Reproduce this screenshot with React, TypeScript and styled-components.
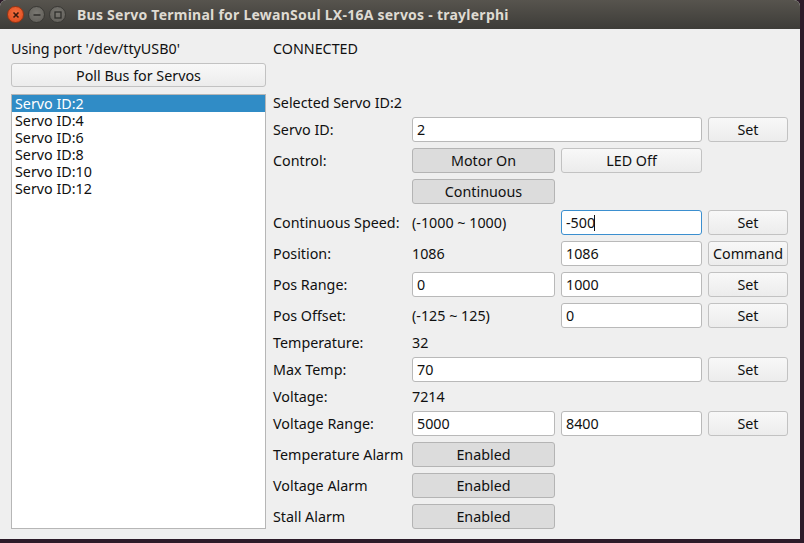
import React from "react";
import styled, { createGlobalStyle } from "styled-components";

const GlobalStyle = createGlobalStyle`
  html, body {
    margin: 0;
    padding: 0;
    background: #2c1b29;
    overflow: hidden;
  }
  * {
    box-sizing: border-box;
  }
`;

const Desktop = styled.div`
  width: 804px;
  height: 543px;
  background: #2c1b29;
  font-family: "Noto Sans", "DejaVu Sans", sans-serif;
  font-size: 14.3px;
  color: #101010;
`;

const Window = styled.div`
  width: 800px;
  height: 539px;
  display: flex;
  flex-direction: column;
  background: #efefef;
  border-radius: 6px 6px 0 0;
  overflow: hidden;
`;

const TitleBar = styled.div`
  height: 29px;
  flex: none;
  display: flex;
  align-items: center;
  padding-left: 7px;
  background: linear-gradient(#57544e, #3d3c38);
`;

const WinButtons = styled.div`
  display: flex;
  gap: 4px;
  margin-right: 11px;
`;

const WinButton = styled.div<{ $close?: boolean }>`
  width: 17px;
  height: 17px;
  border-radius: 50%;
  display: flex;
  align-items: center;
  justify-content: center;
  background: ${(p) =>
    p.$close
      ? "radial-gradient(circle at 50% 40%, #f46f3f, #dc481b)"
      : "radial-gradient(circle at 50% 40%, #7a7872, #5d5b56)"};
  border: 1px solid ${(p) => (p.$close ? "#9c3512" : "#3a3935")};
`;

const Title = styled.div`
  color: #dfdbd2;
  font-weight: 700;
  font-size: 14px;
  letter-spacing: 0.25px;
`;

const Body = styled.div`
  flex: 1;
  display: grid;
  grid-template-columns: 255px 1fr;
  column-gap: 7px;
  padding: 11px 12px 10px 11px;
  min-height: 0;
`;

const LeftPane = styled.div`
  display: flex;
  flex-direction: column;
  min-height: 0;
`;

const Text = styled.div`
  height: 17px;
  line-height: 17px;
  white-space: nowrap;
`;

const PushButton = styled.button<{ $checked?: boolean }>`
  height: 25px;
  padding: 0 4px;
  border-radius: 3px;
  font-family: inherit;
  font-size: 14.3px;
  color: #101010;
  border: 1px solid ${(p) => (p.$checked ? "#b4b4b4" : "#c2c2c2")};
  background: ${(p) =>
    p.$checked ? "#dcdcdc" : "linear-gradient(#f8f8f8, #ececec)"};
  white-space: nowrap;
`;

const PollButton = styled(PushButton)`
  margin-top: 6px;
  height: 24px;
`;

const ServoList = styled.div`
  margin-top: 7px;
  flex: 1;
  background: #fff;
  border: 1px solid #b6b6b6;
`;

const ListItem = styled.div<{ $selected?: boolean }>`
  height: 17px;
  line-height: 17px;
  padding-left: 3px;
  overflow: hidden;
  color: ${(p) => (p.$selected ? "#fff" : "#101010")};
  background: ${(p) => (p.$selected ? "#308cc6" : "transparent")};
`;

const RightPane = styled.div`
  display: flex;
  flex-direction: column;
`;

const Status = styled(Text)`
  margin-bottom: 37px;
`;

const Form = styled.div`
  display: grid;
  grid-template-columns: 133px 143px 141px 80px;
  column-gap: 6px;
  row-gap: 6px;
  margin-top: 6px;
  align-items: center;
`;

const Label = styled(Text)<{ $span?: number }>`
  grid-column: span ${(p) => p.$span ?? 1};
`;

const Field = styled.input<{ $span?: number; $focus?: boolean }>`
  grid-column: span ${(p) => p.$span ?? 1};
  height: 25px;
  width: 100%;
  padding: 0 4px;
  font-family: inherit;
  font-size: 14.3px;
  color: #101010;
  background: #fff;
  border-radius: 3px;
  border: 1px solid ${(p) => (p.$focus ? "#3b8fcf" : "#b9b9b9")};
  outline: none;
`;

const Cursor = styled.span`
  position: absolute;
  top: 5px;
  width: 1px;
  height: 16px;
  background: #101010;
`;

const FieldWrap = styled.div`
  position: relative;
  display: flex;
`;

const Gap = styled.div<{ $span?: number }>`
  grid-column: span ${(p) => p.$span ?? 1};
`;

const Wide = styled(PushButton)`
  width: 100%;
`;

const App: React.FC = () => {
  const servos = [2, 4, 6, 8, 10, 12];
  return (
    <>
      <GlobalStyle />
      <Desktop>
        <Window>
          <TitleBar>
            <WinButtons>
              <WinButton $close>
                <svg width="8" height="8" viewBox="0 0 8 8">
                  <path d="M1.5 1.5 L6.5 6.5 M6.5 1.5 L1.5 6.5" stroke="#3a1a0e" strokeWidth="1.6" />
                </svg>
              </WinButton>
              <WinButton>
                <svg width="8" height="8" viewBox="0 0 8 8">
                  <path d="M0.5 4 H7.5" stroke="#2f2e2b" strokeWidth="1.6" />
                </svg>
              </WinButton>
              <WinButton>
                <svg width="8" height="8" viewBox="0 0 8 8">
                  <rect x="1" y="1" width="6" height="6" fill="none" stroke="#2f2e2b" strokeWidth="1.3" />
                </svg>
              </WinButton>
            </WinButtons>
            <Title>Bus Servo Terminal for LewanSoul LX-16A servos - traylerphi</Title>
          </TitleBar>
          <Body>
            <LeftPane>
              <Text>Using port '/dev/ttyUSB0'</Text>
              <PollButton>Poll Bus for Servos</PollButton>
              <ServoList>
                {servos.map((id, i) => (
                  <ListItem key={id} $selected={i === 0}>
                    Servo ID:{id}
                  </ListItem>
                ))}
              </ServoList>
            </LeftPane>
            <RightPane>
              <Status>CONNECTED</Status>
              <Text>Selected Servo ID:2</Text>
              <Form>
                <Label>Servo ID:</Label>
                <Field $span={2} defaultValue="2" />
                <Wide>Set</Wide>

                <Label>Control:</Label>
                <Wide $checked>Motor On</Wide>
                <Wide>LED Off</Wide>
                <Gap />

                <Gap />
                <Wide $checked>Continuous</Wide>
                <Gap $span={2} />

                <Label>Continuous Speed:</Label>
                <Label>(-1000 ~ 1000)</Label>
                <FieldWrap>
                  <Field $focus defaultValue="-500" />
                  <Cursor style={{ left: 33 }} />
                </FieldWrap>
                <Wide>Set</Wide>

                <Label>Position:</Label>
                <Label>1086</Label>
                <Field defaultValue="1086" />
                <Wide>Command</Wide>

                <Label>Pos Range:</Label>
                <Field defaultValue="0" />
                <Field defaultValue="1000" />
                <Wide>Set</Wide>

                <Label>Pos Offset:</Label>
                <Label>(-125 ~ 125)</Label>
                <Field defaultValue="0" />
                <Wide>Set</Wide>

                <Label>Temperature:</Label>
                <Label $span={3}>32</Label>

                <Label>Max Temp:</Label>
                <Field $span={2} defaultValue="70" />
                <Wide>Set</Wide>

                <Label>Voltage:</Label>
                <Label $span={3}>7214</Label>

                <Label>Voltage Range:</Label>
                <Field defaultValue="5000" />
                <Field defaultValue="8400" />
                <Wide>Set</Wide>

                <Label>Temperature Alarm</Label>
                <Wide $checked>Enabled</Wide>
                <Gap $span={2} />

                <Label>Voltage Alarm</Label>
                <Wide $checked>Enabled</Wide>
                <Gap $span={2} />

                <Label>Stall Alarm</Label>
                <Wide $checked>Enabled</Wide>
                <Gap $span={2} />
              </Form>
            </RightPane>
          </Body>
        </Window>
      </Desktop>
    </>
  );
};

export default App;
